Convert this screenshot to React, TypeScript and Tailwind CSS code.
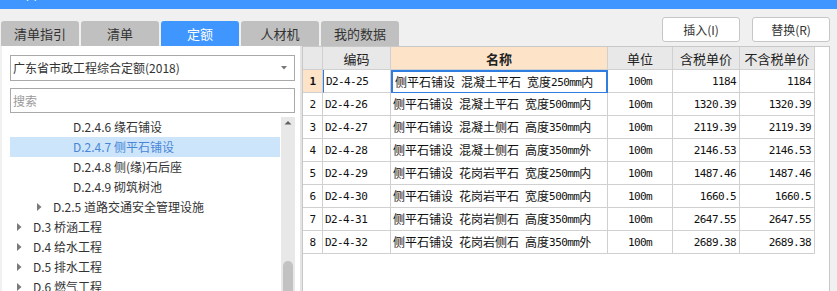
import React from 'react';

const tabs = ['清单指引', '清单', '定额', '人材机', '我的数据'];

const tree = [
  { level: 2, label: 'D.2.4.6 缘石铺设' },
  { level: 2, label: 'D.2.4.7 侧平石铺设', selected: true },
  { level: 2, label: 'D.2.4.8 侧(缘)石后座' },
  { level: 2, label: 'D.2.4.9 砌筑树池' },
  { level: 1, label: 'D.2.5 道路交通安全管理设施', arrow: true },
  { level: 0, label: 'D.3 桥涵工程', arrow: true },
  { level: 0, label: 'D.4 给水工程', arrow: true },
  { level: 0, label: 'D.5 排水工程', arrow: true },
  { level: 0, label: 'D.6 燃气工程', arrow: true },
];

const rows = [
  ['D2-4-25', '侧平石铺设 混凝土平石 宽度250mm内', '100m', '1184', '1184'],
  ['D2-4-26', '侧平石铺设 混凝土平石 宽度500mm内', '100m', '1320.39', '1320.39'],
  ['D2-4-27', '侧平石铺设 混凝土侧石 高度350mm内', '100m', '2119.39', '2119.39'],
  ['D2-4-28', '侧平石铺设 混凝土侧石 高度350mm外', '100m', '2146.53', '2146.53'],
  ['D2-4-29', '侧平石铺设 花岗岩平石 宽度250mm内', '100m', '1487.46', '1487.46'],
  ['D2-4-30', '侧平石铺设 花岗岩平石 宽度500mm内', '100m', '1660.5', '1660.5'],
  ['D2-4-31', '侧平石铺设 花岗岩侧石 高度350mm内', '100m', '2647.55', '2647.55'],
  ['D2-4-32', '侧平石铺设 花岗岩侧石 高度350mm外', '100m', '2689.38', '2689.38'],
];

// half-width glyphs at ~6px like the old song-style grid font
const mono = "font-['DejaVu_Sans_Mono','Noto_Sans_CJK_SC',monospace] text-[11px] tracking-[-0.6px]";

// wrap ascii runs so they get the narrow half-width look
const mixed = (s: string) =>
  s.split(/([\x20-\x7e]+)/).map((part, i) =>
    /^[\x20-\x7e]+$/.test(part) ? (
      <span key={i} className={`${mono} whitespace-pre`}>
        {part}
      </span>
    ) : (
      <span key={i}>{part}</span>
    )
  );

const Arrow = () => (
  <svg width="5" height="8" viewBox="0 0 5 8" className="shrink-0">
    <path d="M0 0 L4.5 4 L0 8 Z" fill="#7a7a7a" />
  </svg>
);

const TreeRow = ({ item }: { item: (typeof tree)[number] }) => {
  const pad = item.level === 2 ? 'pl-[63px]' : item.level === 1 ? 'pl-[27px]' : 'pl-[7px]';
  return (
    <div
      className={`h-[20px] flex items-center whitespace-nowrap ${pad} ${
        item.selected ? 'bg-[#cce5fa] text-[#4a86d8]' : 'text-[#333]'
      }`}
    >
      {item.arrow && (
        <span className="w-[16px] flex items-center">
          <Arrow />
        </span>
      )}
      {item.label}
    </div>
  );
};

export default function App() {
  return (
    <div className="w-[837px] h-[291px] overflow-hidden bg-[#f0f0f0] font-['Noto_Sans_CJK_SC',sans-serif] text-[12px] text-[#333] leading-none">
      {/* title bar (mostly scrolled off) */}
      <div className="h-[9px] bg-[#4096ff] overflow-hidden pl-[10px]">
        <div className="text-white text-[14px] leading-[14px] mt-[-14px]">工料</div>
      </div>

      {/* tabs + buttons */}
      <div className="h-[37px] flex">
        <div className="flex items-end gap-[2px] pl-[1px]">
          {tabs.map((t) => (
            <div
              key={t}
              className={`w-[78px] h-[25px] rounded-t-[3px] flex items-center justify-center text-[13px] ${
                t === '定额' ? 'bg-[#4096ff] text-white' : 'bg-[#c0c0c0] text-[#333]'
              }`}
            >
              {t}
            </div>
          ))}
        </div>
        <div className="ml-auto mr-[7px] mt-[8px] flex gap-[12px]">
          {['插入(I)', '替换(R)'].map((b) => (
            <div
              key={b}
              className="w-[78px] h-[25px] bg-white border border-[#c6c6c6] rounded-[3px] flex items-center justify-center text-[12px] text-[#333]"
            >
              {b}
            </div>
          ))}
        </div>
      </div>

      <div className="flex h-[245px]">
        {/* left panel */}
        <div className="ml-[2px] w-[298px] bg-white flex flex-col pl-[8px] pr-[5px] pt-[9px]">
          <div className="h-[26px] border border-[#a9a9a9] flex items-center pl-[2px] pr-[7px]">
            <span className="flex-1">广东省市政工程综合定额(2018)</span>
            <svg width="6" height="4" viewBox="0 0 6 4">
              <path d="M0 0 L6 0 L3 3.5 Z" fill="#777" />
            </svg>
          </div>
          <div className="mt-[7px] h-[25px] border border-[#a9a9a9] flex items-center pl-[2px] text-[#999]">
            搜索
          </div>
          <div className="mt-[4px] flex flex-1 min-h-0">
            <div className="flex-1 pr-[1px]">
              {tree.map((item) => (
                <TreeRow key={item.label} item={item} />
              ))}
            </div>
            <div className="w-[14px] bg-[#e8e8e8] flex flex-col items-center">
              <svg width="10" height="14" viewBox="0 0 10 14" className="shrink-0">
                <path d="M1.5 7.5 L8.5 7.5 L5 4 Z" fill="#606060" />
              </svg>
              <div className="mt-auto w-[10px] h-[30px] bg-[#c2c2c2] rounded-t-[5px]" />
            </div>
          </div>
        </div>

        <div className="w-[2px] bg-[#e4e4e4]" />

        {/* right panel */}
        <div className="w-[528px] bg-white border-t border-l border-r border-[#c8c8c8]">
          <div className="flex h-[23px] text-[13px] text-[#222]">
            <div className="w-[20px] bg-[#e8e8e8] border-r border-b border-[#d0d0d0]" />
            <div className="w-[68px] bg-[#e8e8e8] border-r border-b border-[#d0d0d0] flex items-center justify-center">编码</div>
            <div className="w-[217px] bg-[#fde4c8] border-r border-b border-[#d0d0d0] flex items-center justify-center font-bold">名称</div>
            <div className="w-[65px] bg-[#e8e8e8] border-r border-b border-[#d0d0d0] flex items-center justify-center">单位</div>
            <div className="w-[67px] bg-[#e8e8e8] border-r border-b border-[#d0d0d0] flex items-center justify-center">含税单价</div>
            <div className="w-[75px] bg-[#e8e8e8] border-r border-b border-[#d0d0d0] flex items-center justify-center">不含税单价</div>
          </div>
          {rows.map((r, i) => (
            <div key={r[0]} className="flex h-[23px] text-[#111]">
              <div
                className={`w-[20px] border-r border-b border-[#d0d0d0] flex items-center justify-center ${mono} ${
                  i === 0 ? 'bg-[#fde4c8] font-bold' : ''
                }`}
              >
                {i + 1}
              </div>
              <div
                className={`w-[68px] border-r border-b border-[#d0d0d0] flex items-center pl-[2px] ${mono} ${
                  i === 0 ? 'border-l border-l-[#2f7de0]' : ''
                }`}
              >
                {r[0]}
              </div>
              <div
                className={`w-[217px] border-b flex items-center pl-[2px] whitespace-nowrap ${
                  i === 0 ? 'border-2 border-[#2f7de0] pl-[1px]' : 'border-r border-[#d0d0d0]'
                }`}
              >
                {mixed(r[1])}
              </div>
              <div className={`w-[65px] border-r border-b border-[#d0d0d0] flex items-center justify-center ${mono}`}>
                {r[2]}
              </div>
              <div className={`w-[67px] border-r border-b border-[#d0d0d0] flex items-center justify-end pr-[3px] ${mono}`}>
                {r[3]}
              </div>
              <div className={`w-[75px] border-r border-b border-[#d0d0d0] flex items-center justify-end pr-[3px] ${mono}`}>
                {r[4]}
              </div>
            </div>
          ))}
        </div>
      </div>
    </div>
  );
}
